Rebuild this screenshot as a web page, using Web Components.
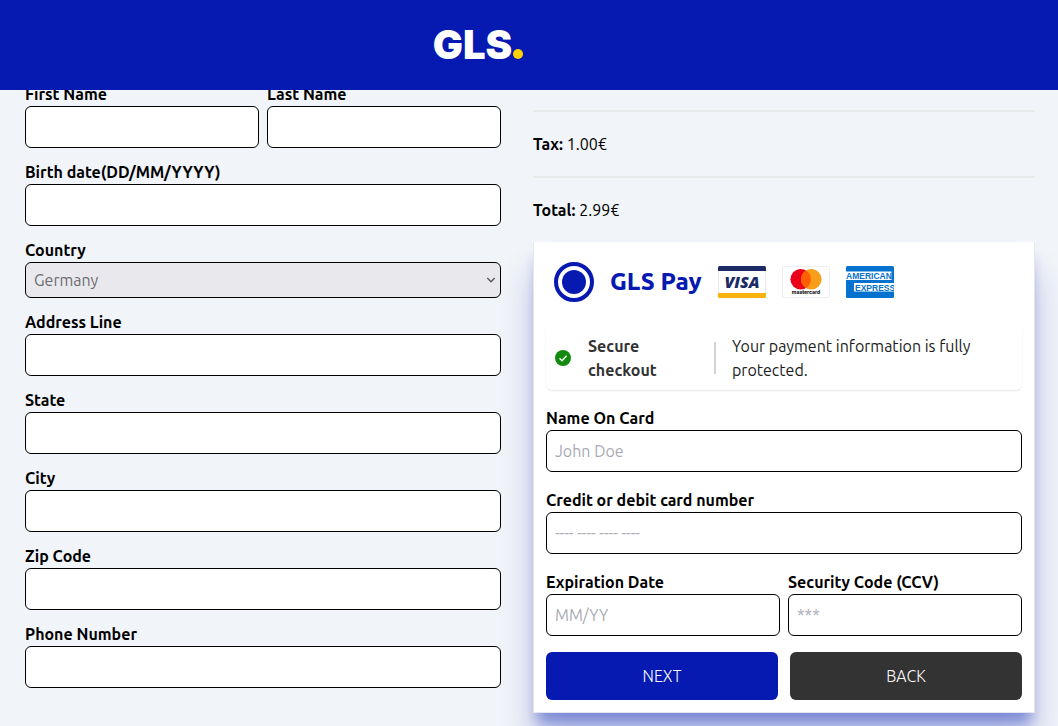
<!DOCTYPE html>
<html lang="en">
<head>
<meta charset="utf-8">
<meta name="viewport" content="width=device-width, initial-scale=1">
<title>GLS Pay</title>
<style>
:root { --brand: #061ab1; --accent: #ffd100; }
body { margin: 0; min-height: 100vh; background: #f1f4f8; color: #000; font: 16px/24px Ubuntu, "Noto Sans", sans-serif; }
</style>
</head>
<body>
<checkout-page></checkout-page>
<script>
const define = (name, html, setup) => customElements.define(name, class extends HTMLElement {
  constructor() {
    super();
    this.attachShadow({ mode: "open" }).innerHTML = html;
  }
  connectedCallback() { if (setup) setup(this, this.shadowRoot); }
});

define("site-header", `
<style>
:host { display: block; position: sticky; top: 0; z-index: 10; background: var(--brand); }
.bar { box-sizing: border-box; height: 90px; display: flex; align-items: center; justify-content: center; padding-right: 102px; }
a { display: flex; align-items: baseline; color: #fff; text-decoration: none; font: 900 40px/48px Inter, sans-serif; }
i { width: 10px; height: 10px; border-radius: 50%; background: var(--accent); margin-left: 1px; }
</style>
<header class="bar"><a href="#" aria-label="GLS home">GLS<i></i></a></header>`);

define("text-field", `
<style>
:host { display: block; }
label { display: block; font-weight: 600; }
input { display: block; box-sizing: border-box; width: 100%; height: 42px; padding: 0 8px; border: 1px solid #000; border-radius: 6px; background: #fff; color: #000; font: inherit; }
input::placeholder { color: #a9abb3; opacity: 1; }
</style>
<label for="f"></label><input id="f" type="text">`, (el, root) => {
  root.querySelector("label").textContent = el.getAttribute("label");
  root.querySelector("input").placeholder = el.getAttribute("placeholder") || "";
});

define("country-field", `
<style>
:host { display: block; }
label { display: block; font-weight: 600; }
.box { display: grid; align-items: center; }
select { grid-area: 1 / 1; appearance: none; box-sizing: border-box; width: 100%; height: 36px; padding: 0 8px; border: 1px solid #000; border-radius: 6px; background: #e9e9ed; color: #6c6c72; opacity: 1; font: inherit; }
svg { grid-area: 1 / 1; justify-self: end; margin-right: 5px; pointer-events: none; }
</style>
<label for="c">Country</label>
<div class="box">
<select id="c" disabled><option>Germany</option></select>
<svg width="10" height="10" viewBox="0 0 10 10" fill="none" stroke="#55555a" stroke-width="1.3"><path d="M1.3 3 5 6.8 8.7 3"/></svg>
</div>`);

define("field-row", `
<style>
:host { display: grid; grid-template-columns: 1fr 1fr; gap: 8px; }
</style><slot></slot>`);

define("price-line", `
<style>
:host { display: block; }
hr { margin: 0 0 20px; border: 0; height: 2px; background: #e8eaec; }
p { margin: 0 0 20px; }
b { font-weight: 700; }
</style>
<hr><p><b></b> <slot></slot></p>`, (el, root) => {
  root.querySelector("b").textContent = el.getAttribute("label");
});

define("visa-card", `
<style>:host, svg { display: block; }</style>
<svg width="48" height="32" viewBox="0 0 48 32" role="img" aria-label="Visa">
<rect x=".5" y=".5" width="47" height="31" rx="1.5" fill="#fff" stroke="#e8e8ee"/>
<path d="M0 5V1.5Q0 0 1.5 0h45Q48 0 48 1.5V5Z" fill="#1a2b66"/>
<path d="M0 27v3.500Q0 32 1.500 32h45q1.500 0 1.500-1.500V27Z" fill="#f9b20e"/>
<text x="24" y="22" text-anchor="middle" font-family="Open Sans, sans-serif" font-size="16" font-weight="800" font-style="italic" fill="#1a2b66">VISA</text>
</svg>`);

define("mastercard-card", `
<style>:host, svg { display: block; }</style>
<svg width="48" height="32" viewBox="0 0 48 32" role="img" aria-label="Mastercard">
<rect x=".5" y=".5" width="47" height="31" rx="2" fill="#fff" stroke="#ececf2"/>
<circle cx="18.700" cy="13.300" r="10.300" fill="#eb001b"/>
<circle cx="29.300" cy="13.300" r="10.300" fill="#f79e1b"/>
<path d="M24 4.500a10.300 10.300 0 0 1 0 17.600a10.300 10.300 0 0 1 0-17.600Z" fill="#ff5f00"/>
<text x="24" y="28" text-anchor="middle" font-family="Inter, sans-serif" font-size="5" font-weight="800" fill="#222">mastercard</text>
</svg>`);

define("amex-card", `
<style>:host, svg { display: block; }</style>
<svg width="48" height="32" viewBox="0 0 48 32" role="img" aria-label="American Express">
<rect width="48" height="32" rx="1.500" fill="#0572cf"/>
<path d="M0 5.500h45.500v8.500H0ZM8 17h40v8.500H8Z" fill="#fff"/>
<g font-family="Liberation Sans, sans-serif" font-size="8.500" font-weight="700" fill="#0572cf">
<text x="0" y="13">AMERICAN</text>
<text x="9" y="24.500">EXPRESS</text>
</g>
</svg>`);

define("pay-method", `
<style>
:host { display: flex; align-items: center; gap: 16px; padding: 8px 8px 24px; }
input { appearance: none; flex: none; box-sizing: border-box; width: 40px; height: 40px; margin: 0; border: 4px solid var(--brand); border-radius: 50%; padding: 4px; background: var(--brand) content-box; }
label { color: var(--brand); font-size: 24px; line-height: 32px; font-weight: 800; white-space: nowrap; }
</style>
<input id="p" type="radio" checked><label for="p">GLS Pay</label><slot></slot>`);

define("secure-note", `
<style>
:host { display: grid; grid-template-columns: 18px 110px 2px 1fr; column-gap: 16px; align-items: center; padding: 8px 8px; margin-bottom: 16px; border-radius: 6px; box-shadow: 0 1px 2px rgba(0,0,0,.1); }
svg { display: block; justify-self: center; }
b { font-weight: 600; color: #333; }
i { height: 32px; background: #d3d3d6; }
p { margin: 0; color: #1c1c1c; }
</style>
<svg width="16" height="16" viewBox="0 0 16 16"><circle cx="8" cy="8" r="8" fill="#128a0d"/><path d="M4.500 8.300 7 10.700l4.600-5" fill="none" stroke="#fff" stroke-width="1.300"/></svg>
<b>Secure checkout</b><i></i><p>Your payment information is fully protected.</p>`);

define("action-button", `
<style>
:host { display: block; }
button { display: block; width: 100%; height: 48px; border: 0; border-radius: 6px; padding: 0; background: var(--fill); color: #fff; font: inherit; font-weight: 300; text-transform: uppercase; }
</style>
<button type="button"><slot></slot></button>`);

define("payment-card", `
<style>
:host { display: block; padding: 12px; background: #fff; border: 1px solid #e4e6f0; border-top-width: 0; box-shadow: 0 32px 32px rgba(6,26,177,.22), 0 14px 12px -4px rgba(6,26,177,.34); }
.fields { display: grid; gap: 16px; }
.actions { display: grid; grid-template-columns: 1fr 1fr; gap: 12px; }
.next { --fill: var(--brand); }
.back { --fill: #333; }
</style>
<pay-method><visa-card></visa-card><mastercard-card></mastercard-card><amex-card></amex-card></pay-method>
<secure-note></secure-note>
<div class="fields">
<text-field label="Name On Card" placeholder="John Doe"></text-field>
<text-field label="Credit or debit card number" placeholder="---- ---- ---- ----"></text-field>
<field-row><text-field label="Expiration Date" placeholder="MM/YY"></text-field><text-field label="Security Code (CCV)" placeholder="***"></text-field></field-row>
<div class="actions"><action-button class="next">NEXT</action-button><action-button class="back">BACK</action-button></div>
</div>`);

define("checkout-page", `
<style>
:host { display: block; }
main { display: grid; grid-template-columns: 476fr 502fr; column-gap: 32px; margin-top: -8px; padding: 0 23px 13px 25px; align-items: start; overflow: hidden; }
form { display: grid; gap: 12px; }
section { padding-top: 28px; }
</style>
<site-header></site-header>
<main>
<form>
<field-row><text-field label="First Name"></text-field><text-field label="Last Name"></text-field></field-row>
<text-field label="Birth date(DD/MM/YYYY)"></text-field>
<country-field></country-field>
<text-field label="Address Line"></text-field>
<text-field label="State"></text-field>
<text-field label="City"></text-field>
<text-field label="Zip Code"></text-field>
<text-field label="Phone Number"></text-field>
</form>
<section>
<price-line label="Tax:">1.00€</price-line>
<price-line label="Total:">2.99€</price-line>
<payment-card></payment-card>
</section>
</main>`);
</script>
</body>
</html>
